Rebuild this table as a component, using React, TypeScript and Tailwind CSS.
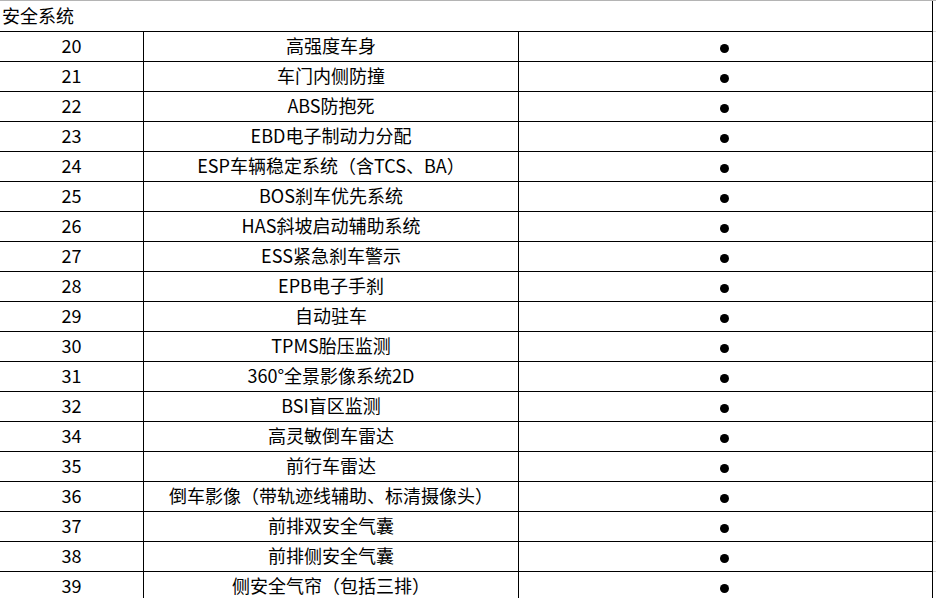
const rows: [string, string][] = [
  ["20", "高强度车身"],
  ["21", "车门内侧防撞"],
  ["22", "ABS防抱死"],
  ["23", "EBD电子制动力分配"],
  ["24", "ESP车辆稳定系统（含TCS、BA）"],
  ["25", "BOS刹车优先系统"],
  ["26", "HAS斜坡启动辅助系统"],
  ["27", "ESS紧急刹车警示"],
  ["28", "EPB电子手刹"],
  ["29", "自动驻车"],
  ["30", "TPMS胎压监测"],
  ["31", "360°全景影像系统2D"],
  ["32", "BSI盲区监测"],
  ["34", "高灵敏倒车雷达"],
  ["35", "前行车雷达"],
  ["36", "倒车影像（带轨迹线辅助、标清摄像头）"],
  ["37", "前排双安全气囊"],
  ["38", "前排侧安全气囊"],
  ["39", "侧安全气帘（包括三排）"],
];

export default function App() {
  return (
    <div
      className="w-[936px] h-[598px] overflow-hidden bg-white text-black text-[18px] leading-none"
      style={{ fontFamily: '"Noto Sans CJK SC", "Noto Sans", sans-serif' }}
    >
      {/* section header */}
      <div className="flex border-t border-[#b4b4b4]">
        <div className="w-[933px] h-[31px] flex items-center pl-[2px] pb-[3px] border-r border-b border-black">
          安全系统
        </div>
        <div className="flex-1 border-b border-[#d4d4d4]" />
      </div>

      {rows.map(([no, name]) => (
        <div key={no} className="flex">
          <div className="w-[144px] h-[30px] flex items-center justify-center pb-[3px] border-r border-b border-black">
            {no}
          </div>
          <div className="w-[375px] h-[30px] flex items-center justify-center pb-[3px] border-r border-b border-black">
            {name}
          </div>
          <div className="w-[414px] h-[30px] flex items-center justify-center border-r border-b border-black">
            <div className="w-[9px] h-[9px] rounded-full bg-black mt-[3px] mr-[2px]" />
          </div>
          <div className="flex-1 border-b border-[#d4d4d4]" />
        </div>
      ))}
    </div>
  );
}
